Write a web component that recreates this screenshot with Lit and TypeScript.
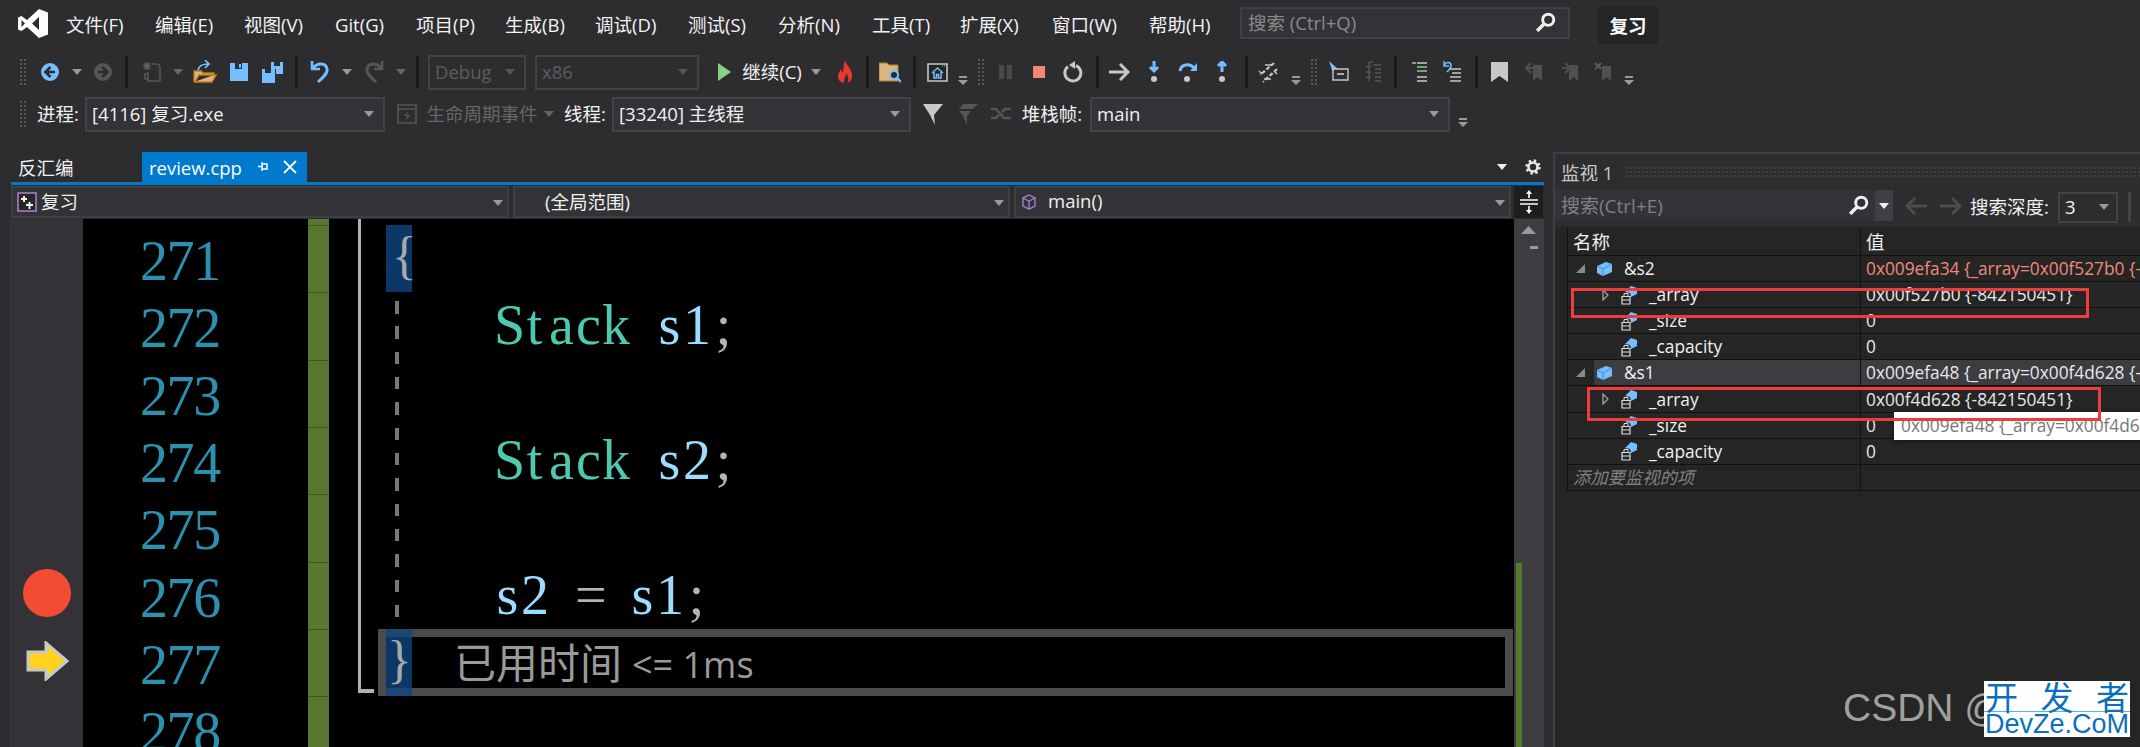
import { LitElement, css, html, svg, TemplateResult } from 'lit';
import { customElement } from 'lit/decorators.js';

const BLUE = '#75beff';
const GREY = '#c8c8c8';
const OFF = '#565658';

const ic = (w: number, h: number, body: unknown) =>
  html`<svg width=${w} height=${h} viewBox="0 0 ${w} ${h}" fill="none">${body}</svg>`;

const caret = (c = '#999') => ic(10, 6, svg`<path d="M0 0H10L5 6Z" fill=${c}/>`);
const overflow = () => ic(10, 26, svg`<path d="M1 17H9V19H1ZM0 21H10L5 26Z" fill="#999"/>`);
const grip = html`<div class="grip"></div>`;
const sep = html`<div class="sep"></div>`;

const circle = (fill: string, d: string) =>
  ic(20, 20, svg`<circle cx="10" cy="10" r="9" fill=${fill}/><path d=${d} stroke="#2d2d30" stroke-width="2.6"/>`);

const icons = {
  back: circle(BLUE, 'M10.5 5L5.5 10L10.5 15M6 10H15'),
  fwd: circle(OFF, 'M9.5 5L14.5 10L9.5 15M14 10H5'),
  newp: ic(22, 22, svg`<path d="M6 1V9M2 5H10M3 2L9 8M9 2L3 8" stroke="#5e5e60" stroke-width="1.6"/>
    <path d="M11 3H15C18 3 19 5 19 7V20H7V11M7 13H4V18H7" stroke=${OFF} stroke-width="1.6"/>`),
  open: ic(24, 24, svg`<path d="M1 22V11H8L10 13H21V15M1 22H19L23 15H6L2 22" fill="#dcb67a" stroke="#c27d1a" stroke-width="1.4"/>
    <path d="M5 10C6 5 10 4 15 4M12 0L16 4L12 8" stroke=${BLUE} stroke-width="1.7"/>`),
  save: ic(18, 18, svg`<path d="M0 0H18V18H0Z" fill=${BLUE}/><path d="M5 0H12V6H5Z" fill="#2d2d30"/><path d="M9 1H11V5H9Z" fill=${BLUE}/>`),
  saveAll: ic(22, 22, svg`<path d="M9 1H21V13H14V8H9Z" fill=${BLUE}/><path d="M12 1H18V5H12Z" fill="#2d2d30"/>
    <path d="M0 8H13V22H0Z" fill=${BLUE}/><path d="M3 8H9V12H3Z" fill="#2d2d30"/>`),
  undo: ic(20, 22, svg`<path d="M2 0V8H10" stroke=${BLUE} stroke-width="2.6"/><path d="M3 7C8 1 16 2 17 8C18 13 12 17 8 21" stroke=${BLUE} stroke-width="3"/>`),
  redo: ic(20, 22, svg`<path d="M18 0V8H10" stroke=${OFF} stroke-width="2.6"/><path d="M17 7C12 1 4 2 3 8C2 13 8 17 12 21" stroke=${OFF} stroke-width="3"/>`),
  play: ic(13, 18, svg`<path d="M0 0L13 9L0 18Z" fill="#89d185"/>`),
  fire: ic(16, 22, svg`<path d="M8 0C10 5 15 8 15 15C15 19 13 21 11 22C12 18 11 15 9 12C9 16 7 17 7 22C3 21 1 19 1 15C1 12 3 10 4 8C4 10 5 11 6 11C7 8 6 4 8 0Z" fill="#e8392a"/>`),
  folderFind: ic(22, 22, svg`<path d="M0 2H8L10 4H19V20H0Z" fill="#dcb67a" stroke="#a87c3c" stroke-width="1"/>
    <circle cx="15" cy="14" r="4" fill="#2d2d30" stroke=${BLUE} stroke-width="2"/><path d="M18 17L22 21" stroke=${BLUE} stroke-width="2.4"/>`),
  home: ic(21, 19, svg`<path d="M1 1H20V18H1Z" fill="#252526" stroke=${GREY} stroke-width="1.6"/>
    <path d="M5 10L10.5 5L16 10M7 9V15H9.5V11.5H11.5V15H14V9" stroke=${BLUE} stroke-width="1.5"/><path d="M15 3H18" stroke=${GREY} stroke-width="1" stroke-dasharray="1 1"/>`),
  pause: ic(13, 14, svg`<path d="M0 0H5V14H0ZM8 0H13V14H8Z" fill="#49494b"/>`),
  stop: ic(12, 12, svg`<path d="M0 0H12V12H0Z" fill="#f48771"/>`),
  restart: ic(20, 22, svg`<path d="M6 5A8 8 0 1 0 14 5" stroke=${GREY} stroke-width="3" transform="rotate(-8 10 13)"/><path d="M12 0V8L6 4Z" fill=${GREY}/>`),
  right: ic(21, 18, svg`<path d="M0 9H19M11 1L19 9L11 17" stroke=${GREY} stroke-width="3"/>`),
  into: ic(12, 22, svg`<path d="M6 0V9M2 6L6 10L10 6" stroke=${BLUE} stroke-width="3"/><circle cx="6" cy="18" r="3" fill=${GREY}/>`),
  over: ic(20, 22, svg`<path d="M2 10C3 3 12 2 16 7" stroke=${BLUE} stroke-width="3"/><path d="M19 2V10H12Z" fill=${BLUE}/><circle cx="9" cy="18" r="3" fill=${GREY}/>`),
  out: ic(12, 22, svg`<path d="M6 11V2M2 5L6 1L10 5" stroke=${BLUE} stroke-width="3"/><circle cx="6" cy="18" r="3" fill=${GREY}/>`),
  threads: ic(20, 21, svg`<path d="M16 1L2 13M19 7L5 20" stroke=${GREY} stroke-width="2.2" stroke-dasharray="4 2"/><path d="M7 3H14M6 17H13M1 9L4 12M16 9L19 12" stroke=${GREY} stroke-width="1.4"/>`),
  pointer: ic(20, 22, svg`<path d="M0 0L9 8H4V12Z" fill=${BLUE}/><path d="M4 8H19V19H4Z" fill="#2d2d30" stroke=${GREY} stroke-width="1.4"/><path d="M8 13H15" stroke=${GREY} stroke-width="1.6"/>`),
  lines: ic(20, 22, svg`<path d="M7 1H11M7 1V20M4 6H9M4 11H9M4 16H9" stroke=${OFF} stroke-width="1.4"/><path d="M11 4H19M13 8H19M13 12H19M13 16H19M13 20H19" stroke=${OFF} stroke-width="1.5"/>`),
  comment: ic(16, 20, svg`<path d="M0 1H4" stroke=${GREY} stroke-width="1.4"/><path d="M5 1H15M5 15H15M5 19H15" stroke=${GREY} stroke-width="1.5"/><path d="M5 5H15M5 9H15" stroke="#89d185" stroke-width="1.6"/>`),
  uncomment: ic(20, 24, svg`<path d="M2 1V6H7" stroke=${BLUE} stroke-width="1.4"/><path d="M2 5C5 1 9 2 9 6C9 8 7 10 5 12" stroke=${BLUE} stroke-width="1.6"/>
    <path d="M8 9H19M10 13H19M8 17H19M8 21H19" stroke=${GREY} stroke-width="1.5"/>`),
  bookmark: ic(17, 20, svg`<path d="M0 0H17V20L8.5 14L0 20Z" fill=${GREY}/>`),
  bmPrev: ic(18, 18, svg`<path d="M8 2H17V18L12.5 14L8 18Z" fill="#505052"/><path d="M6 0L1 5L6 10M1 5H9" stroke="#505052" stroke-width="2"/>`),
  bmNext: ic(18, 18, svg`<path d="M8 2H17V18L12.5 14L8 18Z" fill="#505052"/><path d="M4 0L9 5L4 10M1 5H9" stroke="#505052" stroke-width="2"/>`),
  bmDel: ic(18, 18, svg`<path d="M8 3H17V18L12.5 14L8 18Z" fill="#505052"/><path d="M1 0L7 6M7 0L1 6" stroke="#5c5c5e" stroke-width="2"/>`),
  lifecycle: ic(20, 20, svg`<path d="M1 1H19V19H1ZM1 5H19" stroke=${OFF} stroke-width="1.6"/><path d="M11 7L7 12H10L9 17L13 11H10Z" fill=${OFF}/>`),
  filter: ic(20, 21, svg`<path d="M0 0H20L11 11L12 21L7 11Z" fill=${GREY}/>`),
  filterOff: ic(22, 21, svg`<path d="M7 0H22L17 5H3ZM3 7H15L11 12L11 21L7 12Z" fill=${OFF}/>`),
  flag: ic(22, 16, svg`<path d="M1 3H6L14 12H21M1 12H6L9 9M12 6L15 3H21" stroke=${OFF} stroke-width="2.6"/>`),
  projAdd: ic(20, 20, svg`<path d="M1 1H19V19H1Z" fill="#252526" stroke="#b180d7" stroke-width="1.5"/><path d="M4 7H10M7 4V10M9 13H16M12.500 10V17" stroke="#eee" stroke-width="2"/>`),
  cubeP: ic(14, 16, svg`<path d="M7 1L13 4V12L7 15L1 12V4ZM1 4L7 7L13 4M7 7V15" stroke="#b180d7" stroke-width="1.3"/>`),
  pin: ic(11, 12, svg`<path d="M4 1V10M4 3H9V8H4M0 5.500H4" stroke="#fff" stroke-width="1.4"/>`),
  close: ic(14, 14, svg`<path d="M1 1L13 13M13 1L1 13" stroke="#fff" stroke-width="1.8"/>`),
  gear: ic(16, 16, svg`<circle cx="8" cy="8" r="4.500" stroke="#e8e8e8" stroke-width="2.600"/><circle cx="8" cy="8" r="6.500" stroke="#e8e8e8" stroke-width="2.400" stroke-dasharray="2.400 2.700"/>`),
  splitter: ic(18, 24, svg`<path d="M0 10H18M0 14H18M9 2V8M9 16V22" stroke="#fff" stroke-width="1.6"/><path d="M6 4L9 0L12 4ZM6 20L9 24L12 20Z" fill="#fff"/>`),
  find: html`<svg width="20" height="20" viewBox="0 0 18 18" fill="none"><circle cx="11" cy="7" r="5" stroke="#f0f0f0" stroke-width="2.600"/><path d="M7 11L1 17" stroke="#f0f0f0" stroke-width="3.200"/></svg>`,
  arrowL: ic(22, 18, svg`<path d="M22 9H2M10 1L2 9L10 17" stroke="#4c4c4e" stroke-width="3"/>`),
  arrowR: ic(22, 18, svg`<path d="M0 9H20M12 1L20 9L12 17" stroke="#4c4c4e" stroke-width="3"/>`),
  cube: ic(17, 16, svg`<path d="M1 5L10 1L16 3V11L7 15L1 12Z" fill=${BLUE}/><path d="M1 5L7 8L16 3M7 8V15" stroke="#1f6fb5" stroke-width=".6"/>`),
  member: ic(17, 20, svg`<path d="M4 7L10 1L16 3V9L10 12L9 8Z" fill=${BLUE}/><path d="M1 11.500H9V19H1Z" fill="#252526" stroke="#ddd" stroke-width="1.2"/><path d="M3 11V8.500H7V11M1 15H9" stroke="#ddd" stroke-width="1"/>`),
  triDown: ic(9, 9, svg`<path d="M9 0V9H0Z" fill="#8a8a8a"/>`),
  triRight: ic(7, 12, svg`<path d="M1 1L6 6L1 11Z" stroke="#a0a0a0" stroke-width="1.300"/>`),
  logo: ic(30, 29, svg`<path fill-rule="evenodd" d="M21 0L30 3.500V25.500L21 29L9 18L3.500 22L0 20.500V8.500L3.500 7L9 11ZM21 8L14 14.500L21 21ZM3.500 11V18L7 14.500Z" fill="#fff"/>`),
};

const menus: [string, number][] = [
  ['文件(F)', 89], ['编辑(E)', 89], ['视图(V)', 91], ['Git(G)', 81], ['项目(P)', 89], ['生成(B)', 90], ['调试(D)', 93],
  ['测试(S)', 90], ['分析(N)', 94], ['工具(T)', 88], ['扩展(X)', 92], ['窗口(W)', 97], ['帮助(H)', 92],
];

// x, width, content: each slot keeps the gap to the one before it
type Slot = [number, number, TemplateResult | string];
const place = (start: number, items: Slot[]) => {
  let end = start;
  return items.map(([x, w, t]) => {
    const m = x - end;
    end = x + w;
    return html`<div class="slot" style="margin-left:${m}px;width:${w}px">${t}</div>`;
  });
};
// slot centred on cx
const at = (cx: number, w: number, t: TemplateResult): Slot => [cx - w / 2, w, t];

const combo = (label: string, off = false) =>
  html`<div class="combo ${off ? 'off' : ''}"><span class="combo-text">${label}</span><span class="combo-arrow">${caret(off ? '#555' : '#999')}</span></div>`;

const cells = (s: string, cls: string) =>
  html`<span class=${cls}>${[...s].map((c) => html`<span class="c">${c === ' ' ? '\u00a0' : c}</span>`)}</span>`;

const toolbar1: Slot[] = [
  [19, 8, grip], at(50, 20, icons.back), at(77, 10, caret()), at(103, 20, icons.fwd), at(126, 3, sep),
  at(152, 22, icons.newp), at(178, 10, caret('#666')), at(205, 24, icons.open), at(239, 18, icons.save), at(273, 22, icons.saveAll),
  at(296, 3, sep), at(320, 20, icons.undo), at(347, 10, caret()), at(374, 20, icons.redo), at(401, 10, caret('#666')), at(417, 3, sep),
  [428, 98, combo('Debug', true)], [535, 164, combo('x86', true)],
  at(724, 13, icons.play), [740, 64, html`<span class="txt">继续(C)</span>`], at(816, 10, caret()), at(845, 16, icons.fire), at(867, 3, sep),
  at(890, 22, icons.folderFind), at(914, 3, sep), at(937, 21, icons.home), at(963, 10, overflow()), at(981, 8, grip),
  at(1005, 13, icons.pause), at(1039, 12, icons.stop), at(1073, 20, icons.restart), at(1097, 3, sep),
  at(1119, 21, icons.right), at(1154, 12, icons.into), at(1188, 20, icons.over), at(1222, 12, icons.out), at(1246, 3, sep),
  at(1268, 20, icons.threads), at(1296, 10, overflow()), at(1314, 8, grip), at(1339, 20, icons.pointer), at(1372, 20, icons.lines),
  at(1395, 3, sep), at(1420, 16, icons.comment), at(1452, 20, icons.uncomment), at(1476, 3, sep),
  at(1499, 17, icons.bookmark), at(1534, 18, icons.bmPrev), at(1570, 18, icons.bmNext), at(1603, 18, icons.bmDel), at(1629, 10, overflow()),
];

const toolbar2: Slot[] = [
  [19, 8, grip], [33, 50, html`<span class="txt">进程:</span>`], [85, 300, combo('[4116] 复习.exe')],
  at(407, 20, icons.lifecycle), [423, 118, html`<span class="txt dim">生命周期事件</span>`], at(549, 10, caret('#666')),
  [560, 50, html`<span class="txt">线程:</span>`], [612, 299, combo('[33240] 主线程')],
  at(933, 20, icons.filter), at(967, 22, icons.filterOff), at(1001, 22, icons.flag),
  [1019, 66, html`<span class="txt">堆栈帧:</span>`], [1090, 360, combo('main')], at(1463, 10, overflow()),
];

const rows = [
  { name: '&s2', value: '0x009efa34 {_array=0x00f527b0 {-842150451}', level: 0, changed: true },
  { name: '_array', value: '0x00f527b0 {-842150451}', level: 1, more: true },
  { name: '_size', value: '0', level: 1 },
  { name: '_capacity', value: '0', level: 1 },
  { name: '&s1', value: '0x009efa48 {_array=0x00f4d628 {-842150451}', level: 0, selected: true },
  { name: '_array', value: '0x00f4d628 {-842150451}', level: 1, more: true },
  { name: '_size', value: '0', level: 1 },
  { name: '_capacity', value: '0', level: 1 },
];

@customElement('app-root')
export class AppRoot extends LitElement {
  static styles = css`
    :host {
      display: block;
      width: 2140px;
      height: 747px;
      overflow: hidden;
      background: #2d2d30;
      color: #f1f1f1;
      font-family: 'Open Sans', 'Noto Sans CJK SC', sans-serif;
      font-size: 18.5px;
    }
    svg { display: block; flex: none; }
    .top { height: 152px; display: flex; flex-direction: column; }

    .menubar { height: 52px; display: flex; align-items: flex-start; padding-left: 18px; }
    .logo { width: 48px; padding-top: 9px; }
    .menu { padding-top: 12px; line-height: 26px; white-space: nowrap; color: #f4f4f4; }
    .search {
      width: 330px; height: 32px; margin-top: 7px; margin-left: -1px; box-sizing: border-box;
      border: 2px solid #3f3f46; background: #333337; color: #8a8a8a;
      display: flex; align-items: center; justify-content: space-between; padding: 0 12px 2px 6px;
    }
    .title {
      width: 60px; height: 38px; margin: 6px 0 0 28px; background: #252526; color: #fff;
      font-weight: 700; display: flex; align-items: center; justify-content: center;
    }

    .tb { display: flex; align-items: center; }
    .tb1 { height: 40px; }
    .tb2 { height: 44px; }
    .slot { flex: none; display: flex; align-items: center; justify-content: center; white-space: nowrap; }
    .txt { color: #f1f1f1; padding-bottom: 2px; }
    .dim { color: #656567; }
    .grip {
      width: 8px; height: 29px;
      background-image: radial-gradient(#58585a 1px, transparent 1.300px);
      background-size: 4px 4px;
    }
    .sep { width: 3px; height: 32px; background: #1b1b1c; }
    .combo {
      flex: 1; height: 35px; box-sizing: border-box; border: 2px solid #434346; background: #333337;
      display: flex; align-items: center; justify-content: space-between; padding: 0 9px 2px 5px; color: #f1f1f1;
    }
    .combo.off { background: transparent; color: #5c5c5e; }
    .combo-arrow { flex: none; padding-top: 2px; }

    .main { flex: 1; display: flex; height: 595px; }
    .doc { width: 1544px; flex: none; display: flex; flex-direction: column; }
    .tabs { height: 30px; display: flex; align-items: flex-end; padding-left: 18px; position: relative; }
    .tab-plain { width: 124px; height: 30px; line-height: 32px; }
    .tab {
      width: 165px; height: 30px; background: #007acc; color: #fff; display: flex; align-items: center;
      padding-left: 7px; box-sizing: border-box;
    }
    .tab-label { width: 109px; flex: none; }
    .tab .x { margin-left: 14px; }
    .tab-end { margin-left: auto; display: flex; align-items: center; gap: 18px; height: 30px; padding-right: 3px; }
    .accent { height: 3px; background: #007acc; margin-left: 11px; }

    .nav { height: 34px; display: flex; margin-left: 11px; box-sizing: border-box; padding-top: 1px; gap: 4px; }
    .nav-combo {
      height: 32px; box-sizing: border-box; border: 2px solid #3f3f46; background: #333337;
      display: flex; align-items: center; color: #f1f1f1; padding: 0 0 3px 4px; gap: 4px;
    }
    .nav-combo .arrow { margin-left: auto; margin-right: 4px; padding-top: 3px; }
    .nav-combo svg { position: relative; top: 1px; }
    .n1 { width: 498px; }
    .n2 { width: 497px; padding-left: 30px; }
    .n3 { width: 497px; padding-left: 6px; gap: 12px; }
    .split-btn {
      width: 29px; height: 32px; margin-left: -1px; background: #1e1e1e;
      display: flex; align-items: center; justify-content: center;
    }

    .editor { flex: 1; display: flex; min-height: 0; }
    .margin { width: 11px; background: #2d2d30; flex: none; border-right: 1px solid #3c3c40; box-sizing: border-box; }
    .glyphs {
      width: 72px; flex: none; background: #333337; display: flex; flex-direction: column; align-items: center;
      padding: 350px 0 0 0; box-sizing: border-box;
    }
    .bp { width: 48px; height: 48px; border-radius: 50%; background: #f44b35; margin: 0 0 0 -1px; }
    .cur { margin-top: 24px; }
    .nums, .bar, .code { background: #000; overflow: hidden; }
    .nums { width: 225px; flex: none; padding: 9px 0 0 57px; box-sizing: border-box; }
    .line { height: 67.33px; line-height: 67.33px; white-space: nowrap; font-family: 'Liberation Serif', serif; font-size: 56px; }
    .c { display: inline-block; width: 26.6px; text-align: center; }
    .code .c { width: 27px; }
    .num { color: #2b91af; }
    .kw { color: #4ec9b0; }
    .id { color: #9cdcfe; }
    .op { color: #b4b4b4; }
    .bar { width: 21px; flex: none; background: #5a7731; padding-top: 6px; box-sizing: border-box; }
    .bar div { height: 67.33px; box-sizing: border-box; border-top: 1px solid #3e5620; }

    .code { flex: 1; position: relative; padding-top: 6px; box-sizing: border-box; }
    .stmt { padding-left: 165px; }
    .brace-line { position: relative; padding-left: 57px; }
    .brace {
      position: absolute; left: 57px; top: 0; bottom: 0; width: 26px; background: rgba(15, 70, 130, 0.8);
      color: #a8a8a8; font-family: 'Liberation Serif', serif; font-size: 52px; line-height: 62px;
      box-sizing: border-box;
    }
    .brace.open { padding-left: 6px; }
    .brace.close { padding-left: 1px; }
    .current {
      position: relative; height: 67.33px; margin: 0 1px 0 49px; box-sizing: border-box; border: 8px solid #4b4b4b;
      display: flex; align-items: center; padding-left: 68px; color: #9a9a9a; white-space: nowrap;
    }
    .current .brace { left: 0; top: -8px; bottom: -8px; }
    .tip-cn { font-size: 42px; line-height: 1; }
    .tip-en { font-size: 36px; line-height: 1; margin-left: 10px; padding-top: 5px; }
    .guide {
      position: absolute; left: 29px; top: 0; width: 16px; height: 474px; box-sizing: border-box;
      border-left: 3px solid #b0b0b0; border-bottom: 4px solid #b0b0b0;
    }
    .dash {
      position: absolute; left: 66px; top: 82px; width: 4px; height: 316px;
      background: repeating-linear-gradient(#777 0 12.5px, transparent 12.5px 25.33px);
    }

    .scroll { width: 30px; flex: none; background: #3e3e42; position: relative; }
    .scroll .up { position: absolute; left: 7px; top: 7px; }
    .scroll .mark { position: absolute; left: 16px; top: 27px; width: 8px; height: 3px; background: #999; }
    .scroll .chg { position: absolute; left: 2px; top: 344px; bottom: 0; width: 6px; background: #557a2f; }

    .watch {
      margin-left: 9px; flex: 1; position: relative; box-sizing: border-box; overflow: hidden;
      border-left: 2px solid #3f3f46; border-top: 2px solid #3f3f46; background: #252526;
      display: flex; flex-direction: column;
    }
    .w-title { height: 36px; flex: none; background: #2d2d30; display: flex; align-items: center; padding-left: 6px; color: #c8c8c8; gap: 12px; }
    .w-grip {
      flex: 1; height: 12px;
      background-image: radial-gradient(#414144 1px, transparent 1.300px);
      background-size: 4px 4px;
    }
    .w-tools { height: 37px; flex: none; background: #2d2d30; display: flex; align-items: flex-start; }
    .w-search {
      width: 338px; height: 31px; background: #3f3f46; display: flex; align-items: center; flex: none;
    }
    .w-input {
      width: 320px; height: 31px; background: #333337; color: #808080; box-sizing: border-box; font-size: 19px;
      display: flex; align-items: center; justify-content: space-between; padding: 0 6px 2px 6px; flex: none;
    }
    .w-drop { flex: 1; display: flex; justify-content: center; }
    .w-arrows { display: flex; gap: 13px; margin: 7px 0 0 12px; }
    .w-depth { margin: 3px 0 0 8px; white-space: nowrap; }
    .w-sel {
      width: 60px; height: 31px; margin: 2px 0 0 9px; box-sizing: border-box; border: 2px solid #434346;
      display: flex; align-items: center; justify-content: space-between; padding: 0 7px 2px 5px;
    }
    .w-sep { width: 3px; height: 30px; background: #434346; margin: 2px 0 0 10px; }

    .head {
      height: 29px; flex: none; margin-left: 12px; display: grid; grid-template-columns: 292px 1fr; align-items: center;
      border-bottom: 1px solid #111; border-left: 1px solid #111; box-sizing: border-box;
    }
    .head div { padding-left: 5px; height: 100%; display: flex; align-items: center; }
    .head div + div { border-left: 1px solid #111; }
    .rows { margin-left: 12px; }
    .row {
      height: 26.1px; display: grid; grid-template-columns: 292px 1fr; box-sizing: border-box;
      border-bottom: 1px solid #111; border-left: 1px solid #111; font-size: 17.3px;
    }
    .name { display: flex; align-items: center; padding-left: 4px; min-width: 0; }
    .name.l1 { padding-left: 29px; }
    .tri { width: 16px; flex: none; display: flex; justify-content: center; }
    .rest { flex: 1; height: 100%; display: flex; align-items: center; gap: 10px; margin-left: 6px; }
    .icon { width: 20px; display: flex; justify-content: center; }
    .val {
      border-left: 1px solid #111; padding-left: 5px; overflow: hidden; white-space: nowrap;
      display: flex; align-items: center; color: #e8e8e8;
    }
    .changed { color: #f08a78; }
    .sel .rest, .sel .val { background: #3c3c41; }
    .add { color: #808080; font-style: italic; padding-left: 5px; line-height: 25px; border-bottom: 1px solid #111; border-left: 1px solid #111; height: 26px; box-sizing: border-box; position: relative; font-size: 17.3px; }
    .add::after { content: ''; position: absolute; left: 292px; top: 0; bottom: 0; width: 1px; background: #111; }

    .tooltip {
      position: absolute; left: 339px; top: 258px; width: 260px; height: 28px; background: #fff; color: #777;
      font-size: 17.3px; line-height: 28px; padding-left: 7px; box-sizing: border-box; overflow: hidden; white-space: nowrap;
      box-shadow: 0 2px 4px rgba(0, 0, 0, 0.4);
    }
    .redbox { position: absolute; box-sizing: border-box; border: 3px solid #ef3b3b; }
    .r1 { left: 16px; top: 134px; width: 518px; height: 30px; }
    .r2 { left: 32px; top: 233px; width: 514px; height: 34px; }

    .csdn {
      position: absolute; left: 288px; top: 532px; color: #a0a0a0; font-family: 'Liberation Sans', sans-serif;
      font-size: 39px; white-space: nowrap;
    }
    .devze {
      position: absolute; left: 429px; top: 527px; width: 146px; height: 56px; background: #fff; color: #0b6fbd;
      display: flex; flex-direction: column; align-items: center; overflow: hidden;
    }
    .devze .cn {
      height: 31px; width: 100%; box-sizing: border-box; padding: 0 1px; border-bottom: 1px solid #55b7ea;
      display: flex; justify-content: space-between; font-family: 'Noto Sans CJK SC', sans-serif; font-size: 33px; line-height: 30px;
    }
    .devze .en { font-size: 27px; line-height: 25px; font-family: 'Liberation Sans', sans-serif; white-space: nowrap; }
  `;

  private renderMenu() {
    return html`
      <div class="menubar">
        <div class="logo">${icons.logo}</div>
        ${menus.map(([m, w]) => html`<div class="menu" style="width:${w}px">${m}</div>`)}
        <div class="search"><span>搜索 (Ctrl+Q)</span>${icons.find}</div>
        <div class="title">复习</div>
      </div>
    `;
  }

  private renderDoc() {
    return html`
      <div class="doc">
        <div class="tabs">
          <div class="tab-plain">反汇编</div>
          <div class="tab"><span class="tab-label">review.cpp</span><span class="pin">${icons.pin}</span><span class="x">${icons.close}</span></div>
          <div class="tab-end">${caret('#f0f0f0')}${icons.gear}</div>
        </div>
        <div class="accent"></div>
        <div class="nav">
          <div class="nav-combo n1">${icons.projAdd}<span>复习</span><span class="arrow">${caret()}</span></div>
          <div class="nav-combo n2"><span>(全局范围)</span><span class="arrow">${caret()}</span></div>
          <div class="nav-combo n3">${icons.cubeP}<span>main()</span><span class="arrow">${caret()}</span></div>
          <div class="split-btn">${icons.splitter}</div>
        </div>
        <div class="editor">
          <div class="margin"></div>
          <div class="glyphs">
            <div class="bp"></div>
            <div class="cur">
              <svg width="43" height="40" viewBox="0 0 43 40"><path d="M2 11H20V2L41 20L20 38V29H2Z" fill="#ffd21e" stroke="#c8c8c8" stroke-width="3"/></svg>
            </div>
          </div>
          <div class="nums">
            ${[271, 272, 273, 274, 275, 276, 277, 278].map((n) => html`<div class="line">${cells(String(n), 'num')}</div>`)}
          </div>
          <div class="bar">${[1, 2, 3, 4, 5, 6, 7, 8].map(() => html`<div></div>`)}</div>
          <div class="code">
            <div class="line brace-line"><span class="brace open">{</span></div>
            <div class="line stmt">${cells('Stack', 'kw')}${cells(' ', 'id')}${cells('s1', 'id')}${cells(';', 'op')}</div>
            <div class="line"></div>
            <div class="line stmt">${cells('Stack', 'kw')}${cells(' ', 'id')}${cells('s2', 'id')}${cells(';', 'op')}</div>
            <div class="line"></div>
            <div class="line stmt">${cells('s2', 'id')}${cells(' = ', 'op')}${cells('s1', 'id')}${cells(';', 'op')}</div>
            <div class="current">
              <span class="brace close">}</span>
              <span class="tip-cn">已用时间</span><span class="tip-en">&lt;= 1ms</span>
            </div>
            <div class="guide"></div>
            <div class="dash"></div>
          </div>
          <div class="scroll">
            <div class="up">${ic(15, 8, svg`<path d="M0 8L7.500 0L15 8Z" fill="#999"/>`)}</div>
            <div class="mark"></div>
            <div class="chg"></div>
          </div>
        </div>
      </div>
    `;
  }

  private renderWatch() {
    return html`
      <div class="watch">
        <div class="w-title"><span>监视 1</span><div class="w-grip"></div></div>
        <div class="w-tools">
          <div class="w-search">
            <div class="w-input"><span>搜索(Ctrl+E)</span>${icons.find}</div>
            <div class="w-drop">${caret('#f0f0f0')}</div>
          </div>
          <div class="w-arrows">${icons.arrowL}${icons.arrowR}</div>
          <div class="w-depth">搜索深度:</div>
          <div class="w-sel"><span>3</span>${caret()}</div>
          <div class="w-sep"></div>
        </div>
        <div class="head"><div>名称</div><div>值</div></div>
        <div class="rows">
          ${rows.map(
            (r) => html`
              <div class="row ${r.selected ? 'sel' : ''}">
                <div class="name ${r.level ? 'l1' : ''}">
                  <div class="tri">${r.level === 0 ? icons.triDown : r.more ? icons.triRight : ''}</div>
                  <div class="rest"><span class="icon">${r.level ? icons.member : icons.cube}</span><span>${r.name}</span></div>
                </div>
                <div class="val ${r.changed ? 'changed' : ''}">${r.value}</div>
              </div>
            `,
          )}
          <div class="add">添加要监视的项</div>
        </div>
        <div class="tooltip">0x009efa48 {_array=0x00f4d628</div>
        <div class="redbox r1"></div>
        <div class="redbox r2"></div>
        <div class="csdn">CSDN @</div>
        <div class="devze">
          <div class="cn"><span>开</span><span>发</span><span>者</span></div>
          <div class="en">DevZe.CoM</div>
        </div>
      </div>
    `;
  }

  render() {
    return html`
      <div class="top">
        ${this.renderMenu()}
        <div class="tb tb1">${place(0, toolbar1)}</div>
        <div class="tb tb2">${place(0, toolbar2)}</div>
      </div>
      <div class="main">${this.renderDoc()}${this.renderWatch()}</div>
    `;
  }
}

declare global {
  interface HTMLElementTagNameMap {
    'app-root': AppRoot;
  }
}
